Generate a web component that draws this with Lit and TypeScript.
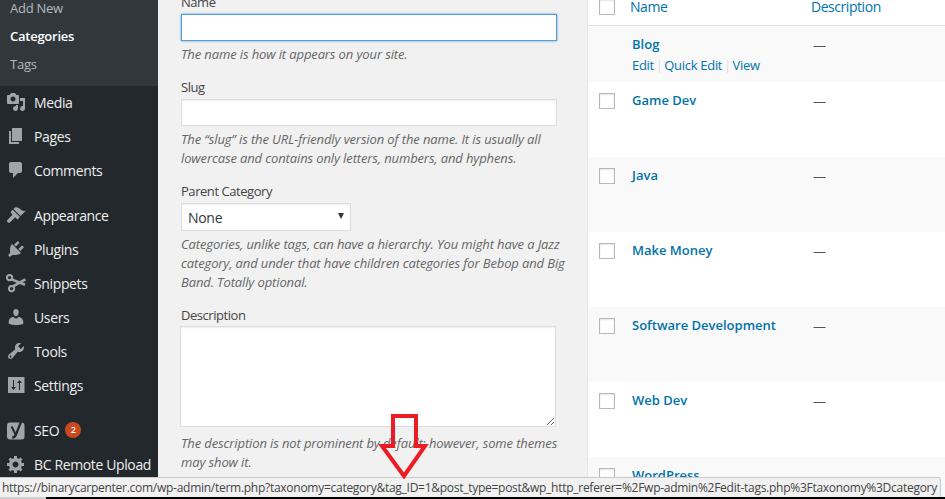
import { LitElement, html, css, svg } from "lit";
import { customElement } from "lit/decorators.js";

const icons: Record<string, any> = {
  media: svg`<path d="M13 11V4c0-.55-.45-1-1-1h-1.67L9 1H5L3.67 3H2c-.55 0-1 .45-1 1v7c0 .55.45 1 1 1h10c.55 0 1-.45 1-1zM7 4.5c1.38 0 2.5 1.12 2.5 2.5S8.38 9.5 7 9.5 4.5 8.38 4.5 7 5.62 4.5 7 4.5zM14 6h5v10.5c0 1.38-1.12 2.5-2.5 2.5S14 17.88 14 16.5s1.12-2.5 2.5-2.5c.17 0 .34.02.5.05V9h-3V6zm-4 8.05V13h2v3.5c0 1.38-1.12 2.5-2.5 2.5S7 17.88 7 16.5 8.12 14 9.5 14c.17 0 .34.02.5.05z"/>`,
  pages: svg`<path d="M6 15V2h10v13H6zm-1 1h8v2H3V5h2v11z"/>`,
  comments: svg`<path d="M5 2h9c1.1 0 2 .9 2 2v7c0 1.1-.9 2-2 2h-2l-5 5v-5H5c-1.1 0-2-.9-2-2V4c0-1.1.9-2 2-2z"/>`,
  appearance: svg`<path d="M14.48 11.06L7.41 3.99l1.5-1.5c.5-.56 2.3-.47 3.51.32 1.21.8 1.43 1.28 2.91 2.1 1.18.64 2.45 1.26 4.45.85zm-.71.71L6.7 4.7 4.93 6.47c-.39.39-.39 1.02 0 1.41l1.06 1.06c.39.39.39 1.03 0 1.42L1.6 14.7c-.7.7-.7 1.9 0 2.6s1.9.7 2.6 0l4.3-4.4c.39-.39 1.03-.39 1.42 0l1.06 1.06c.39.39 1.02.39 1.41 0z"/>`,
  plugins: svg`<path d="M13.11 4.36L9.87 7.6 8 5.73l3.24-3.24c.35-.34 1.05-.2 1.56.32.52.51.66 1.21.31 1.55zm-8 1.77l.91-1.12 9.01 9.01-1.19.84c-.71.71-2.63 1.16-3.82 1.16H6.14L4.9 17.26c-.59.59-1.54.59-2.12 0-.59-.58-.59-1.53 0-2.12l1.24-1.24v-3.88c0-1.13.4-3.19 1.09-3.89zm7.26 3.97l3.24-3.24c.34-.35 1.04-.21 1.55.31.52.51.66 1.21.31 1.55l-3.24 3.25z"/>`,
  snippets: svg`<g fill="none" stroke="#a0a5aa"><circle cx="3.6" cy="4.6" r="2.6" stroke-width="2"/><circle cx="5.6" cy="15.6" r="2.6" stroke-width="2"/><path d="M5.6 6.4L19 11.8M7 13.4L19.4 6.4" stroke-width="2.6"/></g>`,
  users: svg`<path d="M10 9.25c-2.27 0-2.73-3.44-2.73-3.44C7 4.02 7.82 2 9.97 2c2.16 0 2.98 2.02 2.71 3.81 0 0-.41 3.44-2.68 3.44zm0 2.57L12.72 10c2.39 0 4.52 2.33 4.52 4.53v2.49s-3.65 1.13-7.24 1.13c-3.65 0-7.24-1.13-7.24-1.13v-2.49c0-2.25 1.94-4.48 4.47-4.48z"/>`,
  tools: svg`<path d="M16.68 9.77c-1.34 1.34-3.3 1.67-4.95.99l-5.41 6.52c-.99.99-2.59.99-3.58 0s-.99-2.59 0-3.57l6.52-5.42c-.68-1.65-.35-3.61.99-4.95 1.28-1.28 3.12-1.62 4.72-1.06l-2.89 2.89 2.82 2.82 2.86-2.87c.53 1.58.18 3.39-1.08 4.65zM3.81 16.21c.4.39 1.04.39 1.43 0 .4-.4.4-1.04 0-1.43-.39-.4-1.03-.4-1.43 0-.39.39-.39 1.03 0 1.43z"/>`,
  settings: svg`<path fill-rule="evenodd" d="M18.5 18V2H2v16h16.5zM7 5h1v7h2l-2.5 3L5 12h2zM13 15h1V8h2l-2.5-3L11 8h2z"/>`,
  seo: svg`<rect x="1" y="2.5" width="17.5" height="17" rx="3"/><path d="M5.6 6.5L9.6 14.5" fill="none" stroke="#23282d" stroke-width="2"/><path d="M15.5 .5L9.8 15c-.6 1.6-1.4 2.4-3.6 2.6" fill="none" stroke="#23282d" stroke-width="2.2"/>`,
  gear: svg`<path d="M18 12h-2.18c-.17.7-.44 1.35-.81 1.93l1.54 1.54-2.1 2.1-1.54-1.54c-.58.36-1.23.63-1.91.79V19H8v-2.18c-.68-.16-1.33-.43-1.91-.79l-1.54 1.54-2.12-2.12 1.54-1.54c-.36-.58-.63-1.23-.79-1.91H1V9.03h2.17c.16-.7.44-1.35.8-1.94L2.43 5.55l2.1-2.1 1.54 1.54c.58-.37 1.24-.64 1.93-.81V2h3v2.18c.68.16 1.33.43 1.91.79l1.54-1.54 2.12 2.12-1.54 1.54c.36.59.64 1.24.8 1.94H18V12zm-8.5 1.5c1.66 0 3-1.34 3-3s-1.34-3-3-3-3 1.34-3 3 1.34 3 3 3z"/>`,
};

const groups = [
  [["media", "Media"], ["pages", "Pages"], ["comments", "Comments"]],
  [["appearance", "Appearance"], ["plugins", "Plugins"], ["snippets", "Snippets"], ["users", "Users"], ["tools", "Tools"], ["settings", "Settings"]],
  [["seo", "SEO"], ["gear", "BC Remote Upload"]],
];

const terms = ["Game Dev", "Java", "Make Money", "Software Development", "Web Dev", "WordPress"];

@customElement("app-root")
export class AppRoot extends LitElement {
  static styles = css`
    :host { display: block; width: 945px; height: 499px; overflow: hidden; position: relative; background: #f1f1f1; font-family: "Open Sans", sans-serif; font-size: 13px; line-height: 19px; color: #444; }
    .page { display: flex; height: 499px; overflow: hidden; }

    .side { width: 158px; flex: none; background: #23282d; color: #eee; overflow: hidden; }
    .sub { background: #32373c; height: 86px; color: #b4b9be; }
    .sub div { height: 28px; line-height: 28px; padding-left: 10px; position: relative; top: -6px; letter-spacing: -.25px; }
    .sub .cur { color: #fff; font-weight: 600; }
    .group { margin-bottom: 11px; }
    .item { display: flex; align-items: center; box-sizing: border-box; height: 34px; padding-bottom: 2px; font-size: 14px; letter-spacing: -.37px; white-space: nowrap; }
    .item svg { width: 20px; height: 20px; fill: #a0a5aa; margin-left: 6px; margin-right: 8px; flex: none; overflow: visible; }
    .badge { display: inline-block; width: 16px; height: 16px; line-height: 16px; border-radius: 50%; background: #ca4a1f; color: #fff; font-size: 9px; font-weight: 600; text-align: center; margin-left: 6px; letter-spacing: 0; }

    .form { width: 376px; flex: none; margin-left: 23px; margin-top: -7px; }
    .label { display: block; margin-bottom: 2px; letter-spacing: -.45px; }
    .field { margin-bottom: 14px; }
    input, textarea, .select { display: block; box-sizing: border-box; width: 376px; background: #fff; border: 1px solid #ddd; box-shadow: inset 0 1px 2px rgba(0,0,0,.07); margin: 0; padding: 0; outline: none; font: inherit; }
    input { height: 27px; }
    input.focus { border-color: #5b9dd9; box-shadow: 0 0 2px rgba(30,140,190,.8); }
    .select { width: 170px; height: 28px; display: flex; align-items: center; justify-content: space-between; padding: 0 6px 0 6px; font-size: 14px; letter-spacing: -.3px; color: #32373c; }
    .tri { width: 0; height: 0; border-left: 3.5px solid transparent; border-right: 3.5px solid transparent; border-top: 6px solid #32373c; margin-top: -2px; }
    textarea { height: 101px; margin-left: -1px; margin-top: -1px; margin-bottom: 7px; }
    .help { margin: 4px -9px 0 0; color: #666; font-style: italic; letter-spacing: -.12px; }

    .table { margin-left: 30px; flex: 1; background: #fff; border-left: 1px solid #e5e5e5; margin-top: -8px; min-width: 0; }
    .row { display: grid; grid-template-columns: 44px 181px 1fr; box-sizing: border-box; height: 75px; padding-top: 9px; }
    .row.alt { background: #f9f9f9; }
    .row.blog { height: 56px; }
    .head { height: 34px; padding-top: 5px; border-bottom: 1px solid #e1e1e1; font-size: 14px; letter-spacing: -.45px; color: #0073aa; }
    .head .n { margin-left: -2px; }
    .head .d { margin-left: -2px; }
    .box { display: block; width: 16px; height: 16px; box-sizing: border-box; margin: 2px 0 0 11px; border: 1px solid #b4b9be; background: #fff; box-shadow: inset 0 1px 2px rgba(0,0,0,.1); }
    .name { font-size: 13px; font-weight: 600; color: #0073aa; }
    .dash { color: #555; padding-top: 1px; }
    .act { margin-top: 2px; color: #0073aa; letter-spacing: -.3px; }
    .act i { font-style: normal; color: #ddd; margin: 0 -1.3px; }

    .status { position: absolute; left: 0; right: 0; bottom: 0; display: flex; flex-direction: column; }
    .bar { width: 941px; height: 20px; box-sizing: border-box; background: #f1f1f1; border-top: 1px solid #c9c9c9; border-right: 1px solid #c9c9c9; border-top-right-radius: 3px; padding-left: 2px; font-size: 12px; letter-spacing: -.27px; line-height: 19px; color: #444; white-space: nowrap; overflow: hidden; }
    .strip { height: 2px; background: #cfcfcf; display: flex; justify-content: flex-end; }
    .strip div { width: 899px; background: #000; }
    .arrow { position: absolute; left: 375px; top: 410px; width: 60px; height: 75px; }
  `;

  render() {
    return html`
      <div class="page">
        <nav class="side">
          <div class="sub"><div>Add New</div><div class="cur">Categories</div><div>Tags</div></div>
          ${groups.map((g) => html`<div class="group">
            ${g.map(([ic, label]) => html`<div class="item">
              <svg viewBox="0 0 20 20">${icons[ic]}</svg><span>${label}</span>
              ${ic === "seo" ? html`<span class="badge">2</span>` : ""}
            </div>`)}
          </div>`)}
        </nav>
        <section class="form">
          <div class="field">
            <label class="label">Name</label>
            <input class="focus" type="text" />
            <p class="help">The name is how it appears on your site.</p>
          </div>
          <div class="field">
            <label class="label">Slug</label>
            <input type="text" />
            <p class="help">The “slug” is the URL-friendly version of the name. It is usually all lowercase and contains only letters, numbers, and hyphens.</p>
          </div>
          <div class="field">
            <label class="label">Parent Category</label>
            <div class="select"><span>None</span><span class="tri"></span></div>
            <p class="help">Categories, unlike tags, can have a hierarchy. You might have a Jazz category, and under that have children categories for Bebop and Big Band. Totally optional.</p>
          </div>
          <div class="field">
            <label class="label">Description</label>
            <textarea></textarea>
            <p class="help">The description is not prominent by default; however, some themes may show it.</p>
          </div>
        </section>
        <section class="table">
          <div class="row head"><span class="box"></span><span class="n">Name</span><span class="d">Description</span></div>
          <div class="row alt blog">
            <span></span>
            <div><div class="name">Blog</div><div class="act">Edit <i>|</i> Quick Edit <i>|</i> View</div></div>
            <span class="dash">—</span>
          </div>
          ${terms.map((t, i) => html`<div class="row ${i % 2 ? "alt" : ""}">
            <span class="box"></span><span class="name">${t}</span><span class="dash">—</span>
          </div>`)}
        </section>
      </div>
      <div class="status">
        <div class="bar">https://binarycarpenter.com/wp-admin/term.php?taxonomy=category&amp;tag_ID=1&amp;post_type=post&amp;wp_http_referer=%2Fwp-admin%2Fedit-tags.php%3Ftaxonomy%3Dcategory</div>
        <div class="strip"><div></div></div>
      </div>
      <svg class="arrow" viewBox="375 410 60 75"><polygon points="393,416 416,416 416,446 425,446 404,476 382,446 393,446" fill="none" stroke="#ed1c24" stroke-width="4" stroke-linejoin="miter"/></svg>
    `;
  }
}
